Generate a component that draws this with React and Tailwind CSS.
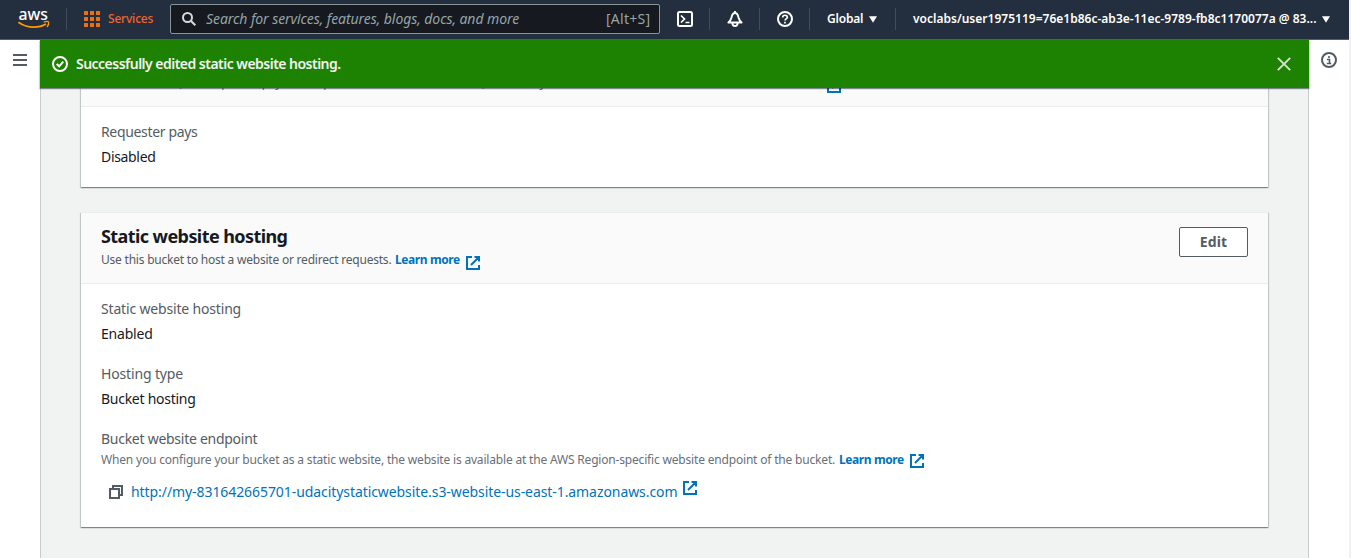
import React from "react";

const CARD =
  "shrink-0 bg-white shadow-[0_1px_1px_0_rgba(0,28,36,0.3),1px_1px_1px_0_rgba(0,28,36,0.15),-1px_1px_1px_0_rgba(0,28,36,0.15)]";

function External({ className = "" }) {
  return (
    <svg className={"shrink-0 " + className} width="14" height="14" viewBox="0 0 14 14" fill="none" stroke="#0073bb" strokeWidth="2">
      <path d="M6 1H1v12h12V9M8.5 1H13v4.5M13 1L5 9" />
    </svg>
  );
}

function Logo() {
  return (
    <svg className="shrink-0 overflow-visible" width="32" height="20" viewBox="0 0 32 20">
      <text x="0.5" y="10.5" fontFamily="Noto Sans, sans-serif" fontSize="17" fontWeight="500" fill="#fff" textLength="29.5" lengthAdjust="spacingAndGlyphs">aws</text>
      <path d="M.4 13.2c5 3.4 9.300 5 15.200 5 4.400 0 9-1.100 12.400-3.200" fill="none" stroke="#ff9900" strokeWidth="1.800" />
      <path d="M25.600 13.200c2-.9 4.300-.9 5-.2.3 1.700-.4 3.800-1.600 5" fill="none" stroke="#ff9900" strokeWidth="1.300" />
    </svg>
  );
}

function Divider() {
  return <div className="h-[22px] w-px shrink-0 bg-[#414d5c]" />;
}

function Header() {
  return (
    <header className="flex h-10 w-[1349px] shrink-0 items-center border-b border-[#545b64] bg-[#232f3e] pb-px font-semibold text-white">
      <div className="flex w-[66px] pl-[18px]"><Logo /></div>
      <Divider />
      <svg className="ml-[17px] shrink-0" width="16" height="16" fill="#ec7211">
        {[0, 6, 12].map((y) => [0, 6, 12].map((x) => <rect key={x + "-" + y} x={x} y={y} width="4" height="4" rx="0.5" />))}
      </svg>
      <span className="ml-2 w-[46px] whitespace-nowrap text-[12px] font-medium tracking-[-0.2px] text-[#f0652f]">Services</span>
      <div className="ml-4 flex h-[30px] w-[490px] shrink-0 items-center rounded-[2px] border border-[#879596] bg-[#16191f] pb-px font-normal text-[#95a5a6]">
        <svg className="ml-[11px] shrink-0" width="14" height="14" fill="none" stroke="#d5dbdb" strokeWidth="2">
          <circle cx="5.500" cy="5.500" r="4.500" /><path d="M8.800 8.800L13.300 13.300" />
        </svg>
        <span className="ml-[10px] flex-1 whitespace-nowrap text-[14px] italic tracking-[-0.07px]">Search for services, features, blogs, docs, and more</span>
        <span className="mr-[9px] w-[44px] whitespace-nowrap text-[14px] tracking-[0.25px]">[Alt+S]</span>
      </div>
      <svg className="ml-[17px] mr-4 shrink-0" width="16" height="16" fill="none" stroke="#fff" strokeWidth="2">
        <rect x="1" y="1" width="14" height="14" rx="1.500" /><path d="M4 4.500L7.500 8 4 11.500M8.500 11.500H12.500" strokeWidth="1.700" />
      </svg>
      <Divider />
      <svg className="ml-[17px] mr-4 shrink-0" width="16" height="16" fill="none" stroke="#fff" strokeWidth="1.900" strokeLinejoin="round">
        <path d="M8 0V2M8 2C6 2 5 4 4.500 6.500 4 8.700 3 10 1.400 11.500H14.600C13 10 12 8.700 11.500 6.500 11 4 10 2 8 2zM5.500 12.500C5.500 15.800 10.500 15.800 10.500 12.500" />
      </svg>
      <Divider />
      <svg className="ml-[17px] mr-4 shrink-0" width="16" height="16" fill="none" stroke="#fff" strokeWidth="2">
        <circle cx="8" cy="8" r="7" /><path d="M5.700 6.500C5.700 3.500 10.300 3.600 10.300 6.200 10.300 8 8 7.800 8 9.600M8 10.800V12.500" strokeWidth="1.700" />
      </svg>
      <Divider />
      <span className="ml-[17px] w-[37px] whitespace-nowrap text-[12px] tracking-[-0.2px]">Global</span>
      <svg className="ml-[5px] mr-[18px] shrink-0" width="8" height="7" fill="#fff"><path d="M0 .3H8L4 6.700z" /></svg>
      <Divider />
      <span className="ml-[17px] w-[404px] whitespace-nowrap text-[12px] tracking-[0.01px]">voclabs/user1975119=76e1b86c-ab3e-11ec-9789-fb8c1170077a @ 83...</span>
      <svg className="ml-[5px] shrink-0" width="8" height="7" fill="#fff"><path d="M0 .3H8L4 6.700z" /></svg>
    </header>
  );
}

function Banner() {
  return (
    <div className="relative z-10 flex h-12 w-[1269px] shrink-0 items-center bg-[#1d8102] px-3 text-white shadow-[0_1px_1px_0_rgba(0,28,36,0.3),1px_1px_1px_0_rgba(0,28,36,0.15),-1px_1px_1px_0_rgba(0,28,36,0.15)]">
      <svg className="shrink-0" width="16" height="16" fill="none" stroke="#fff" strokeWidth="2">
        <circle cx="8" cy="8" r="7" /><path d="M4.700 8L7.200 10.300 11.300 5.700" />
      </svg>
      <span className="ml-2 flex-1 whitespace-nowrap pb-px text-[14px] font-semibold tracking-[-0.52px] text-[#f2f3f3]">Successfully edited static website hosting.</span>
      <svg className="mr-[6px] shrink-0" width="14" height="14" fill="none" stroke="#d5e6d0" strokeWidth="1.900"><path d="M.8 .8L13.200 13.200M13.200 .8L.8 13.200" /></svg>
    </div>
  );
}

function Field({ label, value, labelClass, valueClass }) {
  return (
    <div className="flex flex-col text-[14px] leading-[22px]">
      <span className={"whitespace-nowrap text-[#545b64] " + labelClass}>{label}</span>
      <span className={"mt-[3px] whitespace-nowrap text-[#16191f] " + valueClass}>{value}</span>
    </div>
  );
}

export default function App() {
  return (
    <div className="flex h-[558px] w-[1351px] flex-col overflow-hidden bg-[#f1f1f1] font-['Noto_Sans',sans-serif]">
      <Header />
      <div className="flex min-h-0 w-[1349px] flex-1 bg-white">
        <nav className="w-10 shrink-0 pl-[13px] pt-[14px]">
          <svg width="14" height="12" fill="#545b64"><path d="M0 0h14v2H0zM0 5h14v2H0zM0 10h14v2H0z" /></svg>
        </nav>
        <main className="flex w-[1269px] shrink-0 flex-col">
          <Banner />
          <div className="flex min-h-0 flex-1 flex-col overflow-hidden border-x border-[#c6cccc] bg-[#f1f3f3] px-10">
            <section className={CARD + " h-[99px]"}>
              <div className="flex h-[19px] flex-col justify-end overflow-hidden border-b border-[#eaeded] bg-[#fafafa] pb-[13px] pl-5">
                <div className="flex h-5 items-end text-[12px] leading-[18px] text-[#687078]">
                  <span className="w-[655px] whitespace-nowrap pb-px tracking-[-0.24px]">When enabled, the requester pays for requests and data transfer costs, and anonymous access to this bucket is disabled.</span>
                  <span className="w-[66px] whitespace-nowrap pb-px font-bold tracking-[-0.4px] text-[#0073bb]">Learn more</span>
                  <External className="ml-[5px]" />
                </div>
              </div>
              <div className="pl-5 pt-[14px]">
                <Field label="Requester pays" value="Disabled" labelClass="tracking-[-0.34px]" valueClass="tracking-[-0.33px]" />
              </div>
            </section>
            <section className={CARD + " mt-[25px] h-[315px] border-t border-[#eaeded]"}>
              <div className="flex h-[71px] justify-between border-b border-[#eaeded] bg-[#fafafa] pl-5 pr-5 pt-[14px]">
                <div>
                  <h2 className="-mt-[2px] h-[22px] whitespace-nowrap text-[18px] font-bold leading-[22px] tracking-[-0.58px] text-[#16191f]">Static website hosting</h2>
                  <div className="mt-[4px] flex text-[12px] leading-[18px] text-[#545b64]">
                    <span className="w-[294px] whitespace-nowrap tracking-[-0.22px]">Use this bucket to host a website or redirect requests.</span>
                    <span className="w-[66px] whitespace-nowrap font-bold tracking-[-0.4px] text-[#0073bb]">Learn more</span>
                    <External className="ml-[5px] mt-[5px]" />
                  </div>
                </div>
                <button className="h-[30px] w-[69px] rounded-[2px] border border-[#545b64] bg-white text-[14px] font-bold leading-[20px] tracking-[0.15px] text-[#545b64]">Edit</button>
              </div>
              <div className="flex flex-col gap-[18px] pl-5 pt-[14px]">
                <Field label="Static website hosting" value="Enabled" labelClass="tracking-[-0.17px]" valueClass="tracking-[-0.2px]" />
                <Field label="Hosting type" value="Bucket hosting" labelClass="tracking-[-0.15px]" valueClass="tracking-[-0.27px]" />
                <div>
                  <div className="whitespace-nowrap text-[14px] leading-[22px] tracking-[-0.27px] text-[#545b64]">Bucket website endpoint</div>
                  <div className="flex text-[12px] leading-[20px] text-[#687078]">
                    <span className="w-[738px] whitespace-nowrap tracking-[-0.182px]">When you configure your bucket as a static website, the website is available at the AWS Region-specific website endpoint of the bucket.</span>
                    <span className="w-[66px] whitespace-nowrap font-bold tracking-[-0.4px] text-[#0073bb]">Learn more</span>
                    <External className="ml-[5px] mt-[4px]" />
                  </div>
                  <div className="mt-[11px] flex pl-2 text-[14px] leading-[22px] text-[#0073bb]">
                    <svg className="mt-[4px] shrink-0" width="14" height="14" fill="none" stroke="#545b64" strokeWidth="2">
                      <path d="M1 4H10V13H1zM4 4V1H13V10H10" />
                    </svg>
                    <span className="ml-2 w-[547px] whitespace-nowrap tracking-[-0.075px]">http://my-831642665701-udacitystaticwebsite.s3-website-us-east-1.amazonaws.com</span>
                    <External className="ml-[5px]" />
                  </div>
                </div>
              </div>
            </section>
          </div>
        </main>
        <aside className="pl-3 pt-3">
          <svg width="16" height="16" fill="none" stroke="#545b64" strokeWidth="2">
            <circle cx="8" cy="8" r="7" /><path d="M8 4V6M6 7.500H8.500V11M5.800 11.500H10.200" strokeWidth="1.600" />
          </svg>
        </aside>
      </div>
    </div>
  );
}
